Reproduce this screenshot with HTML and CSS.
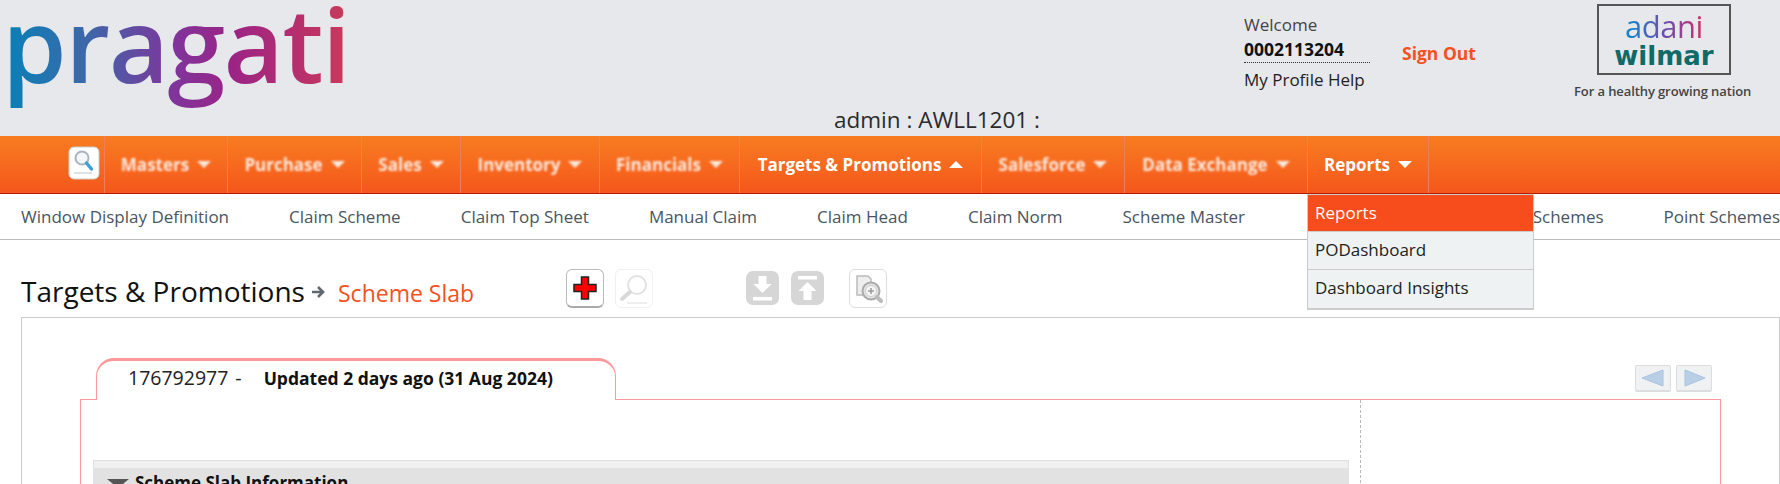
FILE: index.html
```html
<!DOCTYPE html>
<html lang="en">
<head>
  <meta charset="UTF-8">
  <title>Scheme Slab</title>
  <link rel="stylesheet" href="styles.css">
</head>
<body>
  <!-- Top header -->
  <div class="header">
    <div class="logo">pragati</div>
    <div class="admin">admin : AWLL1201 :</div>
    <div class="user">
      <div>Welcome</div>
      <div class="user-code">0002113204</div>
      <div class="user-links">My Profile Help</div>
    </div>
    <div class="signout">Sign Out</div>
    <div class="brand">
      <div class="brand-box">
        <div class="brand-adani">adani</div>
        <div class="brand-wilmar">wilmar</div>
      </div>
      <div class="brand-tag">For a healthy growing nation</div>
    </div>
  </div>

  <!-- Main menu -->
  <div class="nav">
    <div class="nav-search">
      <svg width="32" height="34" viewBox="0 0 32 34">
        <rect x="1" y="1" width="30" height="32" rx="5" fill="#fff" stroke="#ccc"/>
        <circle cx="14" cy="12" r="6.500" fill="#f4f8fb" stroke="#a9b4bd" stroke-width="2"/>
        <path d="M18.500 17l5 6" stroke="#3f9fd6" stroke-width="3.500" stroke-linecap="round"/>
        <path d="M6 27h18" stroke="#d5d8da" stroke-width="1.500"/>
      </svg>
    </div>
    <div class="nav-item w-masters"><span class="faded">Masters</span><i class="caret faded"></i></div>
    <div class="nav-item w-purchase"><span class="faded">Purchase</span><i class="caret faded"></i></div>
    <div class="nav-item w-sales"><span class="faded">Sales</span><i class="caret faded"></i></div>
    <div class="nav-item w-inventory"><span class="faded">Inventory</span><i class="caret faded"></i></div>
    <div class="nav-item w-financials"><span class="faded">Financials</span><i class="caret faded"></i></div>
    <div class="nav-item w-targets"><span>Targets &amp; Promotions</span><i class="caret up"></i></div>
    <div class="nav-item w-salesforce"><span class="faded">Salesforce</span><i class="caret faded"></i></div>
    <div class="nav-item w-exchange"><span class="faded">Data Exchange</span><i class="caret faded"></i></div>
    <div class="nav-item w-reports"><span>Reports</span><i class="caret"></i></div>
  </div>

  <!-- Sub menu -->
  <div class="subnav">
    <span>Window Display Definition</span>
    <span>Claim Scheme</span>
    <span>Claim Top Sheet</span>
    <span>Manual Claim</span>
    <span>Claim Head</span>
    <span>Claim Norm</span>
    <span>Scheme Master</span>
    <span class="subnav-hidden"></span>
    <span>Point Schemes</span>
    <span>Point Schemes</span>
  </div>

  <!-- Reports dropdown -->
  <div class="dropdown">
    <div class="dropdown-item active">Reports</div>
    <div class="dropdown-item">PODashboard</div>
    <div class="dropdown-item">Dashboard Insights</div>
  </div>

  <!-- Page title and toolbar -->
  <div class="titlebar">
    <div class="title">Targets &amp; Promotions</div>
    <svg class="title-arrow" width="15" height="14" viewBox="0 0 15 14">
      <path d="M1 7h9M7 2l5 5-5 5" fill="none" stroke="#5f6770" stroke-width="2.600"/>
    </svg>
    <div class="subtitle">Scheme Slab</div>
    <div class="tool tool-add">
      <svg width="26" height="26" viewBox="0 0 26 26">
        <path d="M9.500 2h7v7.500H24v7h-7.500V24h-7v-7.500H2v-7h7.500z" fill="#f00" stroke="#222" stroke-width="1.500"/>
      </svg>
    </div>
    <div class="tool tool-off">
      <svg width="34" height="34" viewBox="0 0 34 34">
        <circle cx="20" cy="13" r="9" fill="none" stroke="#e2e2e2" stroke-width="2"/>
        <path d="M13 20l-8 7" stroke="#d8d8d8" stroke-width="4" stroke-linecap="round"/>
        <path d="M10 31h20" stroke="#eee" stroke-width="2"/>
      </svg>
    </div>
    <div class="tool tool-flat tool-down">
      <svg width="33" height="34" viewBox="0 0 33 34">
        <path d="M12.500 5h8v8h5l-9 9-9-9h5zM7 26h19v3.500H7z" fill="#fff"/>
      </svg>
    </div>
    <div class="tool tool-flat tool-up">
      <svg width="33" height="34" viewBox="0 0 33 34">
        <path d="M7 5h19v3.500H7zM16.500 11l9 9h-5v9h-8v-9h-5z" fill="#fff"/>
      </svg>
    </div>
    <div class="tool tool-zoom">
      <svg width="34" height="34" viewBox="0 0 34 34">
        <path d="M6 4h11l3 3v16H6z" fill="#eee" stroke="#bbb" stroke-width="1.500"/>
        <circle cx="20" cy="19" r="8.500" fill="#e4e4e4" stroke="#aaa" stroke-width="2"/>
        <circle cx="20" cy="19" r="5.500" fill="#f5f5f5" stroke="#ccc"/>
        <path d="M20 16v6M17 19h6" stroke="#999" stroke-width="1.500"/>
        <path d="M26 25l4 4" stroke="#bbb" stroke-width="4" stroke-linecap="round"/>
      </svg>
    </div>
  </div>

  <!-- Record form -->
  <div class="content">
    <div class="tabrow">
      <div class="tab">
        <span class="tab-id">176792977</span>
        <span class="tab-dash">-</span>
        <span class="tab-updated">Updated 2 days ago (31 Aug 2024)</span>
      </div>
      <div class="pager">
        <div class="pager-btn">
          <svg width="24" height="18" viewBox="0 0 24 18"><path d="M1 9l21-8v16z" fill="#b9cfe6" stroke="#a9c3e0"/></svg>
        </div>
        <div class="pager-btn">
          <svg width="24" height="18" viewBox="0 0 24 18"><path d="M23 9L3 1v16z" fill="#b9cfe6" stroke="#a9c3e0"/></svg>
        </div>
      </div>
    </div>
    <div class="panel">
      <div class="panel-main">
        <div class="section">
          <div class="section-stripe"></div>
          <div class="section-head"><i class="section-arrow"></i>Scheme Slab Information</div>
        </div>
      </div>
    </div>
  </div>
</body>
</html>
```

FILE: styles.css
```css
/* Basic reset, the page is cut at the window edge */
body, html {
  margin: 0;
  padding: 0;
  height: 484px;
  overflow: hidden;
  background-color: #fff;
  font-family: "Open Sans", "Noto Sans", sans-serif;
  color: #222;
}

/* Header */
.header {
  display: flex;
  height: 136px;
  background-color: #e6e8ec;
  overflow: hidden;
}

.logo {
  width: 352px;
  height: 110px;
  padding-left: 2px;
  box-sizing: border-box;
  font-size: 104px;
  font-weight: 600;
  line-height: 86px;
  letter-spacing: -1.5px;
  white-space: nowrap;
  background: linear-gradient(90deg, #0a80b5 2%, #3c68ab 24%, #80349a 50%, #9c2386 66%, #c8385c 97%);
  background-clip: text;
  -webkit-background-clip: text;
  color: transparent;
}

.admin {
  align-self: flex-end;
  width: 410px;
  margin-left: 482px;
  font-size: 22.5px;
  line-height: 32px;
  color: #2b2b2b;
}

.user {
  width: 158px;
  padding-top: 13px;
  font-size: 17px;
  line-height: 24px;
  color: #444;
}

.user-code {
  width: 126px;
  font-size: 17.5px;
  font-weight: 700;
  line-height: 25px;
  color: #111;
  border-bottom: 1px dotted #333;
}

.user-links {
  margin-top: 5px;
  color: #222;
}

.signout {
  width: 172px;
  padding-top: 41px;
  font-size: 17.5px;
  font-weight: 700;
  color: #f4511e;
}

.brand {
  width: 182px;
}

.brand-box {
  width: 130px;
  height: 67px;
  margin: 4px 0 0 23px;
  border: 2px solid #555;
  text-align: center;
}

.brand-adani {
  margin-top: 2px;
  font-size: 31px;
  line-height: 36px;
  letter-spacing: -0.5px;
  background: linear-gradient(90deg, #1586c8 22%, #6a4fb0 50%, #c5326f 78%);
  background-clip: text;
  -webkit-background-clip: text;
  color: transparent;
}

.brand-wilmar {
  font-family: "DejaVu Sans", sans-serif;
  font-size: 26px;
  font-weight: 700;
  line-height: 24px;
  color: #106b68;
}

.brand-tag {
  margin-top: 7px;
  font-size: 13px;
  font-weight: 600;
  line-height: 18px;
  white-space: nowrap;
  color: #444;
  letter-spacing: -0.1px;
}

/* Main menu */
.nav {
  display: flex;
  height: 57px;
  padding-left: 68px;
  background: linear-gradient(#f87c21, #f5571c);
  border-bottom: 1px solid #b81b00;
}

.nav-search {
  width: 36px;
  padding-top: 10px;
  box-sizing: border-box;
}

.nav-item {
  display: flex;
  align-items: center;
  justify-content: center;
  gap: 8px;
  height: 57px;
  box-sizing: border-box;
  border-left: 1px solid #ee7f5e;
  font-size: 17px;
  font-weight: 700;
  color: #fff;
  white-space: nowrap;
}

.w-masters { width: 123px; }
.w-purchase { width: 134px; }
.w-sales { width: 99px; }
.w-inventory { width: 139px; }
.w-financials { width: 140px; }
.w-targets { width: 242px; }
.w-salesforce { width: 143px; }
.w-exchange { width: 183px; }
.w-reports { width: 122px; border-right: 1px solid #ee7f5e; }

.faded {
  filter: blur(1px);
  opacity: 0.85;
}

.caret {
  width: 0;
  height: 0;
  border-left: 7px solid transparent;
  border-right: 7px solid transparent;
  border-top: 7px solid #fff;
}

.caret.up {
  border-top: 0;
  border-bottom: 7px solid #fff;
}

/* Sub menu */
.subnav {
  display: flex;
  gap: 60px;
  height: 45px;
  padding-left: 21px;
  align-items: center;
  border-bottom: 1px solid #bbb;
  font-size: 17px;
  color: #4a5560;
  white-space: nowrap;
}

.subnav-hidden {
  width: 142px;
}

/* Reports dropdown lies over the sub menu */
.dropdown {
  position: absolute;
  left: 1307px;
  top: 194px;
  width: 227px;
  box-sizing: border-box;
  border: 1px solid #ccc;
  border-bottom-width: 2px;
  background-color: #eff2f3;
}

.dropdown-item {
  height: 38px;
  padding-left: 7px;
  box-sizing: border-box;
  border-bottom: 1px solid #ccc;
  font-size: 17px;
  line-height: 36px;
  color: #222;
}

.dropdown-item:last-child {
  border-bottom: 0;
}

.dropdown-item.active {
  height: 37px;
  background-color: #f74c1c;
  color: #fff;
}

/* Title row */
.titlebar {
  display: flex;
  align-items: flex-start;
  height: 77px;
  padding-left: 21px;
  box-sizing: border-box;
}

.title {
  width: 290px;
  margin-top: 31px;
  font-size: 28px;
  line-height: 40px;
  white-space: nowrap;
  color: #111;
}

.title-arrow {
  margin: 45px 12px 0 0;
}

.subtitle {
  width: 228px;
  margin-top: 34px;
  font-size: 23px;
  line-height: 38px;
  color: #f4511e;
  white-space: nowrap;
}

.tool {
  display: flex;
  align-items: center;
  justify-content: center;
  width: 38px;
  height: 39px;
  margin-top: 29px;
  box-sizing: border-box;
  border: 1px solid #e6e6e6;
  border-radius: 6px;
  background-color: #fff;
}

.tool-add {
  border-color: #bbb;
  border-bottom: 2px solid #aaa;
}

.tool-off {
  margin-left: 11px;
  border-color: #f0f0f0;
}

.tool-flat {
  width: 33px;
  height: 34px;
  margin-top: 31px;
  border: 0;
  border-radius: 7px;
  background-color: #d6d6d6;
}

.tool-down { margin-left: 93px; }
.tool-up { margin-left: 12px; }
.tool-zoom { margin-left: 25px; border-color: #ddd; }

/* Record form */
.content {
  height: 300px;
  margin-left: 21px;
  border: 1px solid #ccc;
}

.tabrow {
  display: flex;
  justify-content: space-between;
  align-items: flex-end;
  height: 81px;
  padding: 0 67px 0 74px;
  box-sizing: border-box;
}

.tab {
  position: relative;
  display: flex;
  align-items: center;
  width: 520px;
  height: 42px;
  margin-bottom: -1px;
  padding: 0 0 6px 31px;
  box-sizing: border-box;
  background-color: #fff;
  border: 1px solid #f99;
  border-top-width: 3px;
  border-bottom: 0;
  border-radius: 18px 18px 0 0;
}

.tab-id {
  font-size: 19.5px;
  color: #222;
}

.tab-dash {
  margin: 0 22px 0 7px;
  font-size: 19.5px;
}

.tab-updated {
  font-size: 17.5px;
  font-weight: 700;
  color: #111;
}

.pager {
  display: flex;
  gap: 5px;
  margin-bottom: 7px;
}

.pager-btn {
  display: flex;
  align-items: center;
  justify-content: center;
  width: 36px;
  height: 27px;
  box-sizing: border-box;
  border: 1px solid #ddd;
  border-bottom-width: 2px;
  border-radius: 2px;
  background-color: #f0f1f2;
}

.panel {
  width: 1641px;
  height: 200px;
  margin-left: 58px;
  box-sizing: border-box;
  border: 1px solid #f99;
}

.panel-main {
  width: 1280px;
  height: 100%;
  padding: 60px 11px 0 12px;
  box-sizing: border-box;
  border-right: 1px dashed #bbb;
}

.section {
  border: 1px solid #e0e0e0;
  background-color: #e2e2e2;
}

.section-stripe {
  height: 7px;
  background-color: #f0f0f0;
}

.section-head {
  display: flex;
  align-items: center;
  gap: 6px;
  padding: 3px 0 0 13px;
  font-size: 17px;
  font-weight: 700;
  line-height: 24px;
  color: #111;
}

.section-arrow {
  width: 0;
  height: 0;
  border-left: 11px solid transparent;
  border-right: 11px solid transparent;
  border-top: 9px solid #555;
}
```
